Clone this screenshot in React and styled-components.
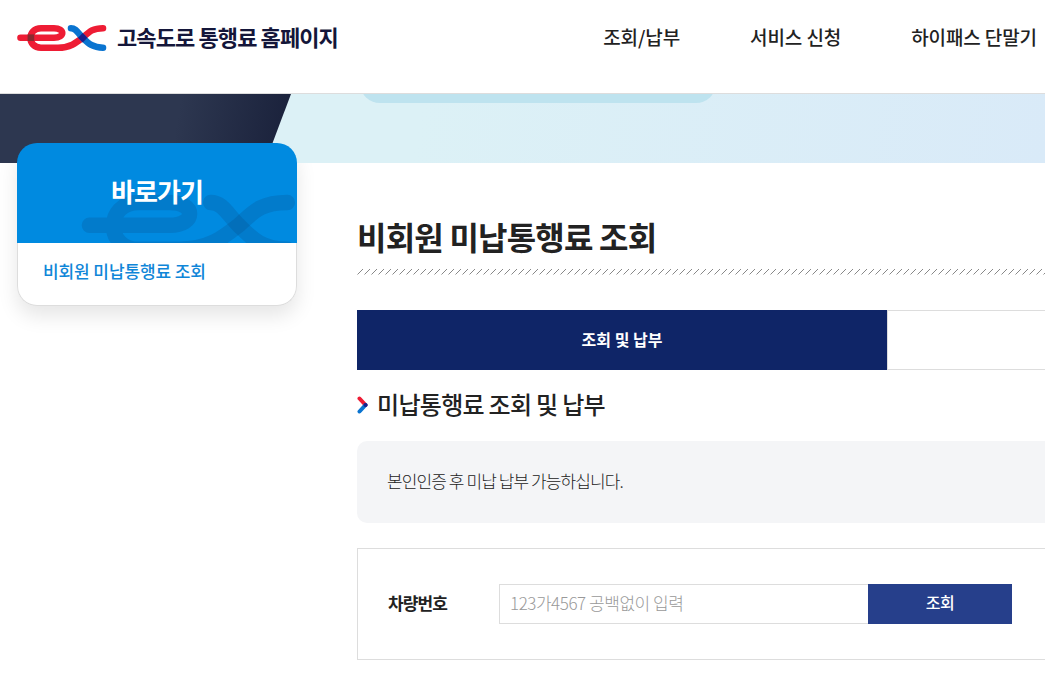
import React from "react";
import styled, { createGlobalStyle } from "styled-components";

const colors = {
  red: "#ee1c34",
  blue: "#0a74d0",
  navy: "#0f2567",
  text: "#222",
  line: "#ddd",
};

const GlobalStyle = createGlobalStyle`
  html, body {
    margin: 0;
    padding: 0;
    overflow: hidden;
    background: #fff;
    font-family: "Noto Sans CJK KR", "Noto Sans", sans-serif;
    color: ${colors.text};
  }
  * { box-sizing: border-box; }
`;

const E_PATH = "M20.5 37.7H54C65 37.7 65 28.2 54 28.2H41C27 28.2 27 47.7 41 47.7H58C70 47.7 76 43 82.7 37.7C89 32 92 28.2 103 28.2";
const X_PATH = "M71 28.2C76 28.2 78 33 82.7 37.7C88 43 92 47.7 103 47.7";

function Logo({ className }) {
  return (
    <svg className={className} viewBox="17 23 90 30" aria-hidden="true">
      <path d={E_PATH} fill="none" stroke={colors.red} strokeWidth="6.6" strokeLinecap="round" />
      <path d={X_PATH} fill="none" stroke={colors.blue} strokeWidth="6.6" strokeLinecap="round" />
      <rect x="27.6" y="34.4" width="6.6" height="6.6" fill="#8a2a30" />
      <path d="M82.7 33.1L87.4 37.8L82.7 42.5L78 37.8Z" fill="#1a1f8a" />
    </svg>
  );
}

function Watermark({ className }) {
  return (
    <svg className={className} viewBox="17 23 90 30" aria-hidden="true">
      <path d={E_PATH} fill="none" stroke="#0a3f78" strokeOpacity="0.2" strokeWidth="6.4" strokeLinecap="round" />
      <path d={X_PATH} fill="none" stroke="#0a3f78" strokeOpacity="0.2" strokeWidth="6.4" strokeLinecap="round" />
    </svg>
  );
}

function App() {
  return (
    <>
      <GlobalStyle />
      <Header>
        <Brand>
          <BrandLogo />
          <BrandName>고속도로 통행료 홈페이지</BrandName>
        </Brand>
        <Nav>
          <NavItem>조회/납부</NavItem>
          <NavItem>서비스 신청</NavItem>
          <NavItem>하이패스 단말기</NavItem>
        </Nav>
      </Header>
      <Hero>
        <HeroDark />
        <HeroPill />
      </Hero>
      <Body>
        <Sidebar>
          <SideHead>
            <SideMark />
            <SideTitle>바로가기</SideTitle>
          </SideHead>
          <SideList>
            <SideLink>비회원 미납통행료 조회</SideLink>
          </SideList>
        </Sidebar>
        <Main>
          <PageTitle>비회원 미납통행료 조회</PageTitle>
          <Hatch aria-hidden="true">
            <defs>
              <pattern id="hatch" width="7" height="7" patternUnits="userSpaceOnUse">
                <path d="M0.5 6.5L6 1" stroke="#888" strokeWidth="1" />
              </pattern>
            </defs>
            <rect width="100%" height="7" fill="url(#hatch)" />
          </Hatch>
          <Tabs>
            <Tab active>조회 및 납부</Tab>
            <Tab />
          </Tabs>
          <SectionTitle>
            <Chevron viewBox="0 0 12 18" aria-hidden="true">
              <path d="M2.5 2.5L8.5 9" stroke={colors.red} strokeWidth="4" strokeLinecap="round" />
              <path d="M8.5 9L2.5 15.5" stroke={colors.blue} strokeWidth="4" strokeLinecap="round" />
              <circle cx="8.5" cy="9" r="2" fill="#1a1f8a" />
            </Chevron>
            미납통행료 조회 및 납부
          </SectionTitle>
          <Notice>본인인증 후 미납 납부 가능하십니다.</Notice>
          <FormBox>
            <Label>차량번호</Label>
            <Input placeholder="123가4567 공백없이 입력" />
            <SearchButton>조회</SearchButton>
          </FormBox>
        </Main>
      </Body>
    </>
  );
}

const Header = styled.header`
  display: flex;
  align-items: center;
  justify-content: space-between;
  height: 94px;
  padding: 0 8px 21px 17px;
  border-bottom: 1px solid ${colors.line};
`;

const Brand = styled.div`
  display: flex;
  align-items: center;
  gap: 10px;
`;

const BrandLogo = styled(Logo)`
  width: 90px;
  height: 30px;
  margin-top: 4px;
`;

const BrandName = styled.div`
  font-size: 22px;
  font-weight: 700;
  letter-spacing: -0.9px;
  color: #14163a;
  white-space: nowrap;
`;

const Nav = styled.nav`
  display: flex;
  gap: 70px;
`;

const NavItem = styled.a`
  font-size: 19px;
  font-weight: 500;
  letter-spacing: -0.1px;
  color: #222;
  white-space: nowrap;
`;

const Hero = styled.div`
  position: relative;
  height: 69px;
  overflow: hidden;
  background: linear-gradient(100deg, #dcf1f6 40%, #d9eaf8 100%);
`;

const HeroDark = styled.div`
  position: absolute;
  inset: 0;
  background: linear-gradient(100deg, #2d3750 0%, #2d3750 60%, #19203a 100%);
  clip-path: polygon(0 0, 291px 0, 265px 100%, 0 100%);
  width: 291px;
`;

const HeroPill = styled.div`
  position: absolute;
  top: -30px;
  left: 360px;
  width: 356px;
  height: 39px;
  background: #bee3ef;
  border-radius: 0 0 20px 20px;
`;

const Body = styled.div`
  display: flex;
  align-items: flex-start;
  padding-left: 17px;
  width: 1100px;
`;

const Sidebar = styled.aside`
  flex: none;
  width: 280px;
  margin-top: -20px;
  border-radius: 20px;
  background: #fff;
  box-shadow: 0 10px 20px rgba(0, 0, 0, 0.1);
`;

const SideHead = styled.div`
  position: relative;
  display: flex;
  align-items: center;
  justify-content: center;
  height: 100px;
  overflow: hidden;
  border-radius: 20px 20px 0 0;
  background: #008ae0;
`;

const SideMark = styled(Watermark)`
  position: absolute;
  left: 64px;
  top: 47px;
  width: 216px;
  height: 72px;
`;

const SideTitle = styled.h2`
  position: relative;
  margin: 0 0 6px;
  font-size: 26px;
  font-weight: 700;
  letter-spacing: -0.9px;
  color: #fff;
`;

const SideList = styled.div`
  height: 63px;
  padding: 15px 0 0 25px;
  border: 1px solid ${colors.line};
  border-top: 0;
  border-radius: 0 0 20px 20px;
`;

const SideLink = styled.a`
  font-size: 17px;
  font-weight: 500;
  letter-spacing: -0.1px;
  color: #0f86d8;
  white-space: nowrap;
`;

const Main = styled.main`
  flex: 1;
  margin-left: 60px;
  padding-top: 49px;
`;

const PageTitle = styled.h1`
  margin: 0;
  font-size: 32px;
  line-height: 48px;
  font-weight: 700;
  letter-spacing: -0.8px;
  color: ${colors.text};
`;

const Hatch = styled.svg`
  display: block;
  width: 100%;
  height: 7px;
  margin-top: 8px;
`;

const Tabs = styled.div`
  display: flex;
  margin-top: 35px;
  height: 60px;
`;

const Tab = styled.div`
  flex: none;
  display: flex;
  align-items: center;
  justify-content: center;
  width: 530px;
  padding-bottom: 2px;
  font-size: 16px;
  font-weight: 700;
  letter-spacing: 0;
  color: #fff;
  background: ${(props) => (props.active ? colors.navy : "#fff")};
  border: ${(props) => (props.active ? "0" : `1px solid ${colors.line}`)};
`;

const SectionTitle = styled.h3`
  display: flex;
  align-items: center;
  gap: 8px;
  margin: 16px 0 0;
  font-size: 24px;
  line-height: 36px;
  font-weight: 500;
  letter-spacing: -0.7px;
  color: ${colors.text};
`;

const Chevron = styled.svg`
  flex: none;
  width: 12px;
  height: 18px;
  margin-top: 2px;
`;

const Notice = styled.div`
  display: flex;
  align-items: center;
  height: 82px;
  margin-top: 19px;
  padding: 0 0 4px 30px;
  border-radius: 10px;
  background: #f4f5f7;
  font-size: 17px;
  font-weight: 300;
  letter-spacing: -0.9px;
  color: #222;
`;

const FormBox = styled.div`
  display: flex;
  align-items: center;
  height: 112px;
  margin-top: 25px;
  padding-left: 30px;
  border: 1px solid ${colors.line};
`;

const Label = styled.label`
  flex: none;
  width: 111px;
  padding-bottom: 4px;
  font-size: 17px;
  font-weight: 700;
  letter-spacing: -0.9px;
  color: #222;
`;

const Input = styled.input`
  flex: none;
  width: 369px;
  height: 40px;
  padding: 0 10px 4px 10px;
  border: 1px solid ${colors.line};
  border-right: 0;
  outline: none;
  font-family: inherit;
  font-size: 17px;
  font-weight: 300;
  letter-spacing: -0.45px;
  &::placeholder {
    color: #999;
    opacity: 1;
  }
`;

const SearchButton = styled.button`
  flex: none;
  width: 144px;
  height: 40px;
  padding: 0 0 4px;
  border: 0;
  background: #263f8b;
  font-family: inherit;
  font-size: 16px;
  font-weight: 500;
  letter-spacing: -0.5px;
  color: #fff;
`;

export default App;
